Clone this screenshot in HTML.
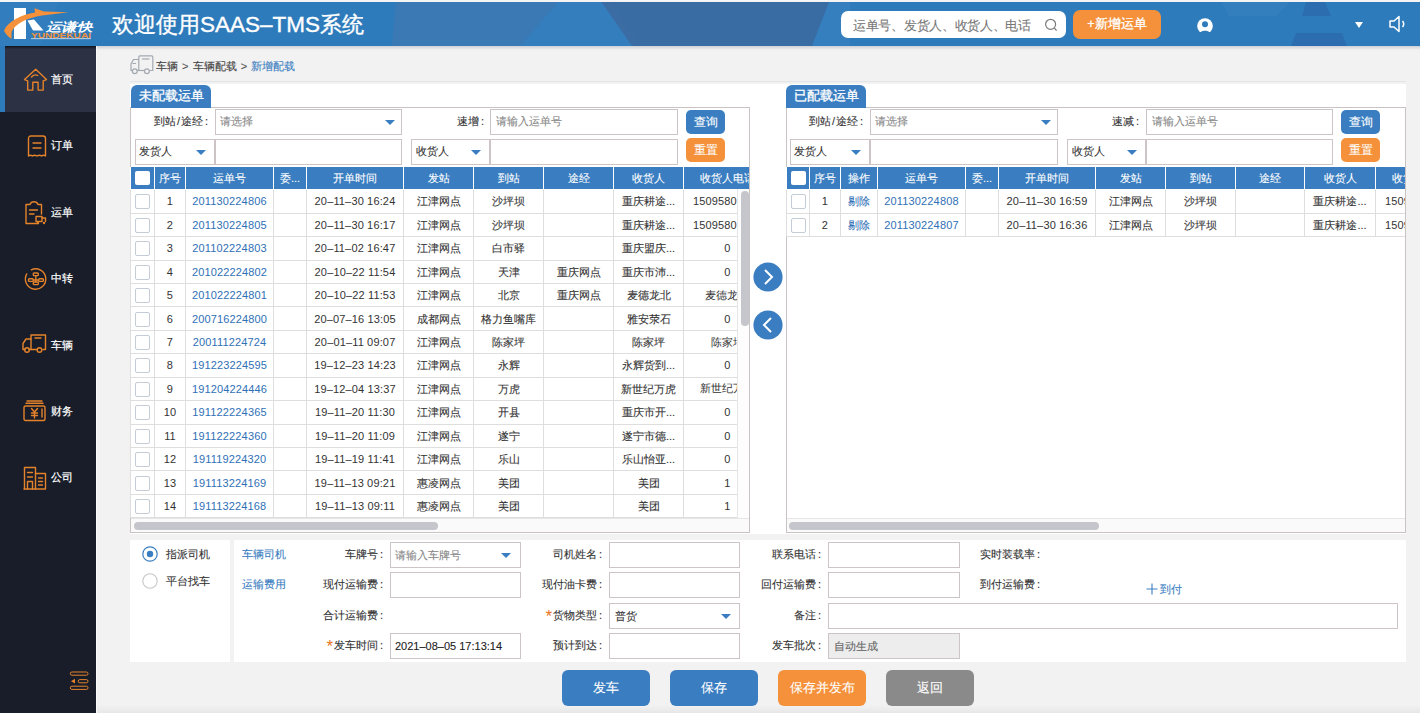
<!DOCTYPE html><html><head><meta charset="utf-8"><title>SAAS-TMS</title><style>
*{margin:0;padding:0;box-sizing:border-box}
html,body{width:1420px;height:713px;overflow:hidden;background:#f2f2f2;font-family:"Liberation Sans",sans-serif;color:#333;font-size:11px;-webkit-text-stroke:0.1px currentColor}
.abs{position:absolute}
.t{position:absolute;white-space:nowrap;line-height:1}
#hdr{position:absolute;left:0;top:0;width:1420px;height:46px;background:#2e7bbb;border-top:2px solid #f4f4f4;overflow:hidden}
#side{position:absolute;left:0;top:46px;width:96px;height:667px;background:#181d29}
.mi{position:absolute;left:0;width:96px;height:66px}
.mi .tx{position:absolute;left:51px;color:#fff;font-size:11px;line-height:1;white-space:nowrap}
.mi svg{position:absolute}
.panel{position:absolute;background:#fff;border:1px solid #c9c3c3}
.tab{position:absolute;background:#3a7ec1;color:#fff;-webkit-text-stroke:0.3px #fff;font-size:12.7px;border-radius:6px 6px 0 0;text-align:center}
.inp{position:absolute;background:#fff;border:1px solid #cdc5c5}
.ph{color:#888}
.caret{position:absolute;width:0;height:0;border-left:5px solid transparent;border-right:5px solid transparent;border-top:5px solid #3a7ec1}
.btn{position:absolute;color:#fff;border-radius:6px;text-align:center}
table{border-collapse:collapse;table-layout:fixed;position:absolute}
td,th{border:1px solid #dedede;text-align:center;white-space:nowrap;overflow:hidden;font-weight:normal;padding:0}
th{background:#3a7ec1;color:#fff;border-color:#fff;border-top:0;font-size:11px}
td{color:#333;font-size:11px;padding-top:1px}
.thumb{background:#c4c6cb}
.lnk{color:#2f70b6}
.cb{display:inline-block;width:15px;height:15px;border:1px solid #c4ccd6;border-radius:2px;background:#fff;vertical-align:middle}
.num{font-size:11px;letter-spacing:0.15px;-webkit-text-stroke:0;position:relative;top:-0.5px}
.lbl{position:absolute;white-space:nowrap;line-height:1;font-size:11px;color:#333;text-align:right}
.star{color:#e8761e;font-size:16px;vertical-align:-3px;line-height:0;margin-right:1px}
.cl{margin-left:2px}
.sl{margin:0 1px}
</style></head><body>
<div id="hdr">
<svg class="abs" style="left:0;top:-2px" width="1420" height="46" viewBox="0 0 1420 46"><polygon points="0,0 60,0 40,46 0,46" fill="#3380c0" opacity="0.5"/><polygon points="396,0 560,0 520,46 392,46" fill="#3f78b2" opacity="0.75"/><polygon points="560,0 610,0 640,46 520,46" fill="#3a80c0" opacity="0.6"/><polygon points="600,0 830,0 812,46 632,46" fill="#3c6aa0" opacity="0.85"/><polygon points="830,0 850,0 850,46 812,46" fill="#3a82c2" opacity="0.6"/><polygon points="1221,2 1290,2 1276,16 1229,16" fill="#3a82c2" opacity="0.45"/><polygon points="1306,2 1325,2 1331,16 1302,16" fill="#2c6cae" opacity="0.9"/><polygon points="1296,33 1342,33 1347,46 1291,46" fill="#2c6cae" opacity="0.9"/></svg>
<svg class="abs" style="left:0;top:-2px" width="100" height="46" viewBox="0 0 100 46"><rect x="14" y="8" width="12" height="31" fill="#fff"/><polygon points="27.5,20.5 34,19.5 43.5,30.5 33,30.5" fill="#fff"/><path d="M4,30.5 C8,21 22,14.5 35,12.5 L34.5,8.3 L44,11.5 L68.5,12.2 L42,15.5 C27,18 15,23.5 11.5,32 L11.5,39 C8,36.5 5,33.5 4,30.5 Z" fill="#f5913a"/><text x="46" y="30.5" fill="#fff" font-size="12" font-style="italic" font-weight="bold" font-family="Liberation Sans" textLength="46" lengthAdjust="spacingAndGlyphs">运谦快</text><text x="31" y="37.6" fill="#f5913a" font-size="6.5" font-weight="bold" font-family="Liberation Sans" textLength="60" lengthAdjust="spacingAndGlyphs">YUNDEKUAI</text><rect x="31" y="38.3" width="60" height="0.8" fill="#dfe8f0"/></svg>
<div class="t" style="left:112px;top:10px;font-size:22px;color:#fff;line-height:26px;-webkit-text-stroke:0.35px #fff">欢迎使用<span style="font-size:22.5px">SAAS–TMS</span>系统</div>
<div class="abs" style="left:841px;top:9px;width:225px;height:27px;background:#fff;border-radius:7px"></div>
<div class="t" style="left:853px;top:16.5px;letter-spacing:-0.3px;font-size:13px;color:#777;line-height:14px">运单号、发货人、收货人、电话</div>
<svg class="abs" style="left:1044px;top:16px" width="16" height="16" viewBox="0 0 16 16"><circle cx="6.6" cy="6.3" r="5" fill="none" stroke="#7a7a7a" stroke-width="1.2"/><line x1="10.5" y1="10.3" x2="12.6" y2="12.6" stroke="#7a7a7a" stroke-width="1.3"/></svg>
<div class="btn" style="left:1073px;top:8px;width:88px;height:29px;background:#f5913a;border-radius:7px;font-size:12.5px;line-height:29px;-webkit-text-stroke:0.3px #fff">+新增运单</div>
<svg class="abs" style="left:1196px;top:15px" width="18" height="18" viewBox="0 0 18 18"><circle cx="9" cy="9" r="7.8" fill="#fff"/><circle cx="9" cy="7.3" r="3" fill="#2e7bbb"/><path d="M3.2,17.5 C3.5,12.5 14.5,12.5 14.8,17.5 Z" fill="#2e7bbb"/></svg>
<div class="abs" style="left:1355px;top:20px;width:0;height:0;border-left:4.5px solid transparent;border-right:4.5px solid transparent;border-top:6px solid #fff"></div>
<svg class="abs" style="left:1388px;top:13px" width="20" height="18" viewBox="0 0 20 18"><path d="M2,6 L6,6 L11,1.5 L11,16.5 L6,12 L2,12 Z" fill="none" stroke="#fff" stroke-width="1.5" stroke-linejoin="round"/><path d="M14.5,6 Q17,9 14.5,12" fill="none" stroke="#fff" stroke-width="1.5"/></svg>
</div>
<div id="side">
<div class="mi" style="top:0;background:#2c3144"><div class="abs" style="left:0;top:0;width:5px;height:66px;background:#2e7bbb"></div></div>
<div class="abs" style="left:5px;top:0;width:91px;height:3px;background:linear-gradient(#10131a,#2c3144)"></div>
<div class="t" style="left:51px;top:27px;color:#fff;font-size:11px;line-height:12px;-webkit-text-stroke:0.2px #fff">首页</div>
<svg class="abs" style="left:23px;top:21px" width="26" height="25" viewBox="0 0 26 25"><path d="M4.7,13.8 L1.5,12.6 L12.75,2.3 L23.5,12.6 L20.2,13.8 L20.2,23.1 L15.1,23.1 L15.1,15.3 L9.8,15.3 L9.8,23.1 L4.7,23.1 Z" fill="none" stroke="#e4832b" stroke-width="1.4" stroke-linejoin="round" stroke-linecap="round"/><path d="M8.5,10 Q11.5,6.8 14.8,8.5" fill="none" stroke="#e4832b" stroke-width="1.4" stroke-linejoin="round" stroke-linecap="round"/></svg>
<div class="t" style="left:51px;top:93px;color:#fff;font-size:11px;line-height:12px;-webkit-text-stroke:0.2px #fff">订单</div>
<svg class="abs" style="left:27px;top:89px" width="20" height="23" viewBox="0 0 20 23"><path d="M1.5,3.5 Q1.5,1 4,1 L16,1 Q18.5,1 18.5,3.5 L18.5,21 Q16.5,19.5 14.5,21 Q12.5,19.5 10,21 Q7.5,19.5 5.5,21 Q3.5,19.5 1.5,21 Z" fill="none" stroke="#e4832b" stroke-width="1.4" stroke-linejoin="round" stroke-linecap="round"/><line x1="6" y1="8" x2="14" y2="8" fill="none" stroke="#e4832b" stroke-width="1.4" stroke-linejoin="round" stroke-linecap="round"/><line x1="6" y1="13" x2="14" y2="13" fill="none" stroke="#e4832b" stroke-width="1.4" stroke-linejoin="round" stroke-linecap="round"/></svg>
<div class="t" style="left:51px;top:160px;color:#fff;font-size:11px;line-height:12px;-webkit-text-stroke:0.2px #fff">运单</div>
<svg class="abs" style="left:24px;top:155px" width="23" height="24" viewBox="0 0 23 24"><path d="M14,22.5 L2,22.5 L2,3.5 L6,3.5 Q7,0.8 10,0.8 Q13,0.8 14,3.5 L17.5,3.5 L17.5,13" fill="none" stroke="#e4832b" stroke-width="1.4" stroke-linejoin="round" stroke-linecap="round"/><line x1="5.5" y1="9" x2="13.5" y2="9" fill="none" stroke="#e4832b" stroke-width="1.4" stroke-linejoin="round" stroke-linecap="round"/><line x1="5.5" y1="13" x2="10" y2="13" fill="none" stroke="#e4832b" stroke-width="1.4" stroke-linejoin="round" stroke-linecap="round"/><rect x="12" y="15.5" width="6" height="5" fill="none" stroke="#e4832b" stroke-width="1.4" stroke-linejoin="round" stroke-linecap="round"/><path d="M18,17 L21.5,17 L21.5,20.5" fill="none" stroke="#e4832b" stroke-width="1.4" stroke-linejoin="round" stroke-linecap="round"/><circle cx="14" cy="22" r="1.2" fill="#e4832b"/><circle cx="20" cy="22" r="1.2" fill="#e4832b"/></svg>
<div class="t" style="left:51px;top:226px;color:#fff;font-size:11px;line-height:12px;-webkit-text-stroke:0.2px #fff">中转</div>
<svg class="abs" style="left:23px;top:220px" width="26" height="26" viewBox="0 0 26 26"><path d="M8.29,3.76 A10.2,10.2 0 1 1 3.77,7.9" fill="none" stroke="#e4832b" stroke-width="1.4" stroke-linejoin="round" stroke-linecap="round"/><rect x="10.3" y="7" width="5" height="2.6" rx="0.8" fill="none" stroke="#e4832b" stroke-width="1.4" stroke-linejoin="round" stroke-linecap="round"/><rect x="5.5" y="12.8" width="4.8" height="2.6" rx="0.8" fill="none" stroke="#e4832b" stroke-width="1.4" stroke-linejoin="round" stroke-linecap="round"/><rect x="15.6" y="12.8" width="4.8" height="2.6" rx="0.8" fill="none" stroke="#e4832b" stroke-width="1.4" stroke-linejoin="round" stroke-linecap="round"/><rect x="10.3" y="16" width="5" height="2.6" rx="0.8" fill="none" stroke="#e4832b" stroke-width="1.4" stroke-linejoin="round" stroke-linecap="round"/><path d="M12.8,9.6 L12.8,16 M10.3,14 L15.6,14" fill="none" stroke="#e4832b" stroke-width="1.4" stroke-linejoin="round" stroke-linecap="round"/></svg>
<div class="t" style="left:51px;top:293px;color:#fff;font-size:11px;line-height:12px;-webkit-text-stroke:0.2px #fff">车辆</div>
<svg class="abs" style="left:22px;top:288px" width="26" height="20" viewBox="0 0 26 20"><path d="M9,15.5 L9,1 L23.5,1 L23.5,15.5 L21,15.5" fill="none" stroke="#e4832b" stroke-width="1.4" stroke-linejoin="round" stroke-linecap="round"/><path d="M9,5 L4,5 L1,9.5 L1,15.5 L3,15.5" fill="none" stroke="#e4832b" stroke-width="1.4" stroke-linejoin="round" stroke-linecap="round"/><line x1="7" y1="15.5" x2="15" y2="15.5" fill="none" stroke="#e4832b" stroke-width="1.4" stroke-linejoin="round" stroke-linecap="round"/><circle cx="5" cy="16" r="2.3" fill="none" stroke="#e4832b" stroke-width="1.4" stroke-linejoin="round" stroke-linecap="round"/><circle cx="17.5" cy="16" r="2.3" fill="none" stroke="#e4832b" stroke-width="1.4" stroke-linejoin="round" stroke-linecap="round"/><line x1="13" y1="4" x2="19" y2="4" fill="none" stroke="#e4832b" stroke-width="1.4" stroke-linejoin="round" stroke-linecap="round"/></svg>
<div class="t" style="left:51px;top:359px;color:#fff;font-size:11px;line-height:12px;-webkit-text-stroke:0.2px #fff">财务</div>
<svg class="abs" style="left:23px;top:354px" width="23" height="22" viewBox="0 0 23 22"><rect x="1" y="6" width="21" height="14.5" rx="1.5" fill="none" stroke="#e4832b" stroke-width="1.4" stroke-linejoin="round" stroke-linecap="round"/><line x1="3" y1="3.3" x2="20" y2="3.3" fill="none" stroke="#e4832b" stroke-width="1.4" stroke-linejoin="round" stroke-linecap="round"/><line x1="4" y1="1" x2="19" y2="1" fill="none" stroke="#e4832b" stroke-width="1.4" stroke-linejoin="round" stroke-linecap="round"/><path d="M8.5,8.5 L11.5,12 L14.5,8.5 M11.5,12 L11.5,18 M8.5,13 L14.5,13 M8.5,15.5 L14.5,15.5" fill="none" stroke="#e4832b" stroke-width="1.4" stroke-linejoin="round" stroke-linecap="round"/><line x1="19" y1="9" x2="19" y2="17" fill="none" stroke="#e4832b" stroke-width="1.4" stroke-linejoin="round" stroke-linecap="round"/></svg>
<div class="t" style="left:51px;top:425px;color:#fff;font-size:11px;line-height:12px;-webkit-text-stroke:0.2px #fff">公司</div>
<svg class="abs" style="left:23px;top:420px" width="24" height="24" viewBox="0 0 24 24"><path d="M1.5,23 L1.5,1.5 L12.5,1.5 L12.5,23" fill="none" stroke="#e4832b" stroke-width="1.4" stroke-linejoin="round" stroke-linecap="round"/><path d="M12.5,7.5 L22.5,7.5 L22.5,23 L1,23" fill="none" stroke="#e4832b" stroke-width="1.4" stroke-linejoin="round" stroke-linecap="round"/><line x1="4.5" y1="6.5" x2="9.5" y2="6.5" fill="none" stroke="#e4832b" stroke-width="1.4" stroke-linejoin="round" stroke-linecap="round"/><line x1="4.5" y1="11" x2="9.5" y2="11" fill="none" stroke="#e4832b" stroke-width="1.4" stroke-linejoin="round" stroke-linecap="round"/><path d="M4.5,23 L4.5,15.5 L9.5,15.5 L9.5,23" fill="none" stroke="#e4832b" stroke-width="1.4" stroke-linejoin="round" stroke-linecap="round"/><line x1="15.5" y1="12" x2="19.5" y2="12" fill="none" stroke="#e4832b" stroke-width="1.4" stroke-linejoin="round" stroke-linecap="round"/><line x1="15.5" y1="15.5" x2="19.5" y2="15.5" fill="none" stroke="#e4832b" stroke-width="1.4" stroke-linejoin="round" stroke-linecap="round"/><line x1="15.5" y1="19" x2="19.5" y2="19" fill="none" stroke="#e4832b" stroke-width="1.4" stroke-linejoin="round" stroke-linecap="round"/></svg>
<svg class="abs" style="left:69px;top:624px" width="20" height="22" viewBox="0 0 20 22"><rect x="1.3" y="2" width="17.7" height="3.2" rx="1.6" fill="none" stroke="#e4832b" stroke-width="1"/><rect x="9.2" y="9.6" width="9.8" height="3.2" rx="1.6" fill="none" stroke="#e4832b" stroke-width="1"/><rect x="1.3" y="16.2" width="17.7" height="3.2" rx="1.6" fill="none" stroke="#e4832b" stroke-width="1"/><path d="M2,11.2 L6,8.8 L6,13.6 Z" fill="#e4832b"/></svg>
</div>
<div class="abs" style="left:96px;top:46px;width:1324px;height:4px;background:linear-gradient(#cdd0d6,#f2f2f2)"></div>
<div class="abs" style="left:96px;top:46px;width:1px;height:667px;background:#fafafa"></div>
<div class="abs" style="left:97px;top:705px;width:1323px;height:8px;background:linear-gradient(#f2f2f2,#e7e7e7)"></div>
<svg class="abs" style="left:130px;top:55px" width="24" height="21" viewBox="0 0 24 21"><path d="M8.8,15.5 L8.8,2 Q8.8,0.8 10,0.8 L21.8,0.8 Q22.8,0.8 22.8,2 L22.8,15.5 L19.5,15.5" fill="none" stroke="#a3a9b1" stroke-width="1.2"/><path d="M8.8,4.5 L3.5,4.5 L1,9 L1,15.5 L2.5,15.5" fill="none" stroke="#a3a9b1" stroke-width="1.2"/><line x1="7" y1="15.5" x2="14" y2="15.5" stroke="#a3a9b1" stroke-width="1.2"/><circle cx="4.8" cy="16.2" r="2.4" fill="none" stroke="#a3a9b1" stroke-width="1.2"/><circle cx="16.9" cy="16.2" r="2.4" fill="none" stroke="#a3a9b1" stroke-width="1.2"/><line x1="12" y1="4" x2="19.5" y2="4" stroke="#a3a9b1" stroke-width="1.2"/><path d="M2.5,8.5 L6,8.5" stroke="#a3a9b1" stroke-width="1"/></svg>
<div class="t" style="left:156px;top:60px;font-size:11px;line-height:12px;color:#444">车辆 <span style="color:#555;margin:0 1px">&gt;</span> 车辆配载 <span style="color:#555;margin:0 1px">&gt;</span> <span style="color:#3a7ec1">新增配载</span></div>
<div class="abs" style="left:130px;top:81px;width:1276px;height:0;border-top:1px solid #e2e4e8"></div>
<div class="abs" style="left:130px;top:84px;width:1276px;height:450px;background:#fff"></div>
<div class="panel" style="left:130px;top:107px;width:620px;height:426px"></div>
<div class="tab" style="left:131px;top:85px;width:80px;height:23px;line-height:23px">未配载运单</div>
<div class="lbl" style="left:208px;top:115.5px;width:80px;margin-left:-80px">到站<span class="sl">/</span>途经<span class="cl">:</span></div>
<div class="inp" style="left:215px;top:109px;width:187px;height:26px"></div>
<div class="t ph" style="left:220px;top:116px;font-size:11px">请选择</div>
<div class="caret" style="left:385px;top:120px"></div>
<div class="lbl" style="left:484px;top:115.5px;width:60px;margin-left:-60px">速增<span class="cl">:</span></div>
<div class="inp" style="left:490px;top:109px;width:188px;height:26px"></div>
<div class="t ph" style="left:496px;top:116px;font-size:11px">请输入运单号</div>
<div class="btn" style="left:686px;top:110px;width:39px;height:24px;background:#3a7ec1;font-size:12px;line-height:24px;border-radius:5px">查询</div>
<div class="inp" style="left:135px;top:139px;width:80px;height:26px"></div>
<div class="t" style="left:139px;top:146px;font-size:11px;color:#333">发货人</div>
<div class="caret" style="left:196px;top:150px"></div>
<div class="inp" style="left:215px;top:139px;width:187px;height:26px"></div>
<div class="inp" style="left:411px;top:139px;width:79px;height:26px"></div>
<div class="t" style="left:416px;top:146px;font-size:11px;color:#333">收货人</div>
<div class="caret" style="left:471px;top:150px"></div>
<div class="inp" style="left:490px;top:139px;width:188px;height:26px"></div>
<div class="btn" style="left:686px;top:138px;width:39px;height:24px;background:#f5913a;font-size:12px;line-height:24px;border-radius:5px">重置</div>
<div class="abs" style="left:130px;top:167px;width:619px;height:351px;overflow:hidden">
<table style="left:0;top:0;width:641px">
<colgroup><col style="width:24px"><col style="width:31px"><col style="width:88px"><col style="width:33px"><col style="width:97px"><col style="width:70px"><col style="width:70px"><col style="width:70px"><col style="width:70px"><col style="width:88px"></colgroup>
<tr style="height:22.7px"><th><span class="cb" style="border:0;width:15px;height:14px"></span></th><th>序号</th><th>运单号</th><th>委...</th><th>开单时间</th><th>发站</th><th>到站</th><th>途经</th><th>收货人</th><th>收货人电话</th></tr>
<tr style="height:23.44px"><td><span class="cb"></span></td><td><span class="num">1</span></td><td><span class="lnk num">201130224806</span></td><td></td><td><span class="num">20–11–30 16:24</span></td><td>江津网点</td><td>沙坪坝</td><td></td><td>重庆耕途...</td><td><span class="num">15095801234</span></td></tr>
<tr style="height:23.44px"><td><span class="cb"></span></td><td><span class="num">2</span></td><td><span class="lnk num">201130224805</span></td><td></td><td><span class="num">20–11–30 16:17</span></td><td>江津网点</td><td>沙坪坝</td><td></td><td>重庆耕途...</td><td><span class="num">15095801234</span></td></tr>
<tr style="height:23.44px"><td><span class="cb"></span></td><td><span class="num">3</span></td><td><span class="lnk num">201102224803</span></td><td></td><td><span class="num">20–11–02 16:47</span></td><td>江津网点</td><td>白市驿</td><td></td><td>重庆盟庆...</td><td><span class="num">0</span></td></tr>
<tr style="height:23.44px"><td><span class="cb"></span></td><td><span class="num">4</span></td><td><span class="lnk num">201022224802</span></td><td></td><td><span class="num">20–10–22 11:54</span></td><td>江津网点</td><td>天津</td><td>重庆网点</td><td>重庆市沛...</td><td><span class="num">0</span></td></tr>
<tr style="height:23.44px"><td><span class="cb"></span></td><td><span class="num">5</span></td><td><span class="lnk num">201022224801</span></td><td></td><td><span class="num">20–10–22 11:53</span></td><td>江津网点</td><td>北京</td><td>重庆网点</td><td>麦德龙北</td><td><span class="num">麦德龙北</span></td></tr>
<tr style="height:23.44px"><td><span class="cb"></span></td><td><span class="num">6</span></td><td><span class="lnk num">200716224800</span></td><td></td><td><span class="num">20–07–16 13:05</span></td><td>成都网点</td><td>格力鱼嘴库</td><td></td><td>雅安荥石</td><td><span class="num">0</span></td></tr>
<tr style="height:23.44px"><td><span class="cb"></span></td><td><span class="num">7</span></td><td><span class="lnk num">200111224724</span></td><td></td><td><span class="num">20–01–11 09:07</span></td><td>江津网点</td><td>陈家坪</td><td></td><td>陈家坪</td><td><span class="num">陈家坪</span></td></tr>
<tr style="height:23.44px"><td><span class="cb"></span></td><td><span class="num">8</span></td><td><span class="lnk num">191223224595</span></td><td></td><td><span class="num">19–12–23 14:23</span></td><td>江津网点</td><td>永辉</td><td></td><td>永辉货到...</td><td><span class="num">0</span></td></tr>
<tr style="height:23.44px"><td><span class="cb"></span></td><td><span class="num">9</span></td><td><span class="lnk num">191204224446</span></td><td></td><td><span class="num">19–12–04 13:37</span></td><td>江津网点</td><td>万虎</td><td></td><td>新世纪万虎</td><td><span class="num">新世纪万虎</span></td></tr>
<tr style="height:23.44px"><td><span class="cb"></span></td><td><span class="num">10</span></td><td><span class="lnk num">191122224365</span></td><td></td><td><span class="num">19–11–20 11:30</span></td><td>江津网点</td><td>开县</td><td></td><td>重庆市开...</td><td><span class="num">0</span></td></tr>
<tr style="height:23.44px"><td><span class="cb"></span></td><td><span class="num">11</span></td><td><span class="lnk num">191122224360</span></td><td></td><td><span class="num">19–11–20 11:09</span></td><td>江津网点</td><td>遂宁</td><td></td><td>遂宁市德...</td><td><span class="num">0</span></td></tr>
<tr style="height:23.44px"><td><span class="cb"></span></td><td><span class="num">12</span></td><td><span class="lnk num">191119224320</span></td><td></td><td><span class="num">19–11–19 11:41</span></td><td>江津网点</td><td>乐山</td><td></td><td>乐山怡亚...</td><td><span class="num">0</span></td></tr>
<tr style="height:23.44px"><td><span class="cb"></span></td><td><span class="num">13</span></td><td><span class="lnk num">191113224169</span></td><td></td><td><span class="num">19–11–13 09:21</span></td><td>惠凌网点</td><td>美团</td><td></td><td>美团</td><td><span class="num">1</span></td></tr>
<tr style="height:23.44px"><td><span class="cb"></span></td><td><span class="num">14</span></td><td><span class="lnk num">191113224168</span></td><td></td><td><span class="num">19–11–13 09:11</span></td><td>惠凌网点</td><td>美团</td><td></td><td>美团</td><td><span class="num">1</span></td></tr>
</table></div>
<div class="abs" style="left:737px;top:189px;width:12px;height:329px;background:#fdfdfd;border-left:1px solid #e6e6e6"></div>
<div class="abs" style="left:741px;top:191px;width:8px;height:135px;background:#c4c6cb;border-radius:4px"></div>
<div class="abs" style="left:131px;top:518px;width:618px;height:14px;background:#fafafa;border-top:1px solid #e6e6e6"></div>
<div class="abs" style="left:134px;top:522px;width:304px;height:8px;background:#c4c6cb;border-radius:4px"></div>
<svg class="abs" style="left:753px;top:262px" width="30" height="30" viewBox="-15 -15 30 30"><circle r="14.6" fill="#3a7ec1"/><path d="M-3,-7 L4,0 L-3,7" fill="none" stroke="#fff" stroke-width="2"/></svg>
<svg class="abs" style="left:753px;top:310px" width="30" height="30" viewBox="-15 -15 30 30"><circle r="14.6" fill="#3a7ec1"/><path d="M3,-7 L-4,0 L3,7" fill="none" stroke="#fff" stroke-width="2"/></svg>
<div class="panel" style="left:786px;top:107px;width:620px;height:426px"></div>
<div class="tab" style="left:786px;top:85px;width:80px;height:23px;line-height:23px">已配载运单</div>
<div class="lbl" style="left:863px;top:115.5px;width:80px;margin-left:-80px">到站<span class="sl">/</span>途经<span class="cl">:</span></div>
<div class="inp" style="left:870px;top:109px;width:188px;height:26px"></div>
<div class="t ph" style="left:875px;top:116px;font-size:11px">请选择</div>
<div class="caret" style="left:1041px;top:120px"></div>
<div class="lbl" style="left:1139px;top:115.5px;width:60px;margin-left:-60px">速减<span class="cl">:</span></div>
<div class="inp" style="left:1146px;top:109px;width:187px;height:26px"></div>
<div class="t ph" style="left:1152px;top:116px;font-size:11px">请输入运单号</div>
<div class="btn" style="left:1341px;top:110px;width:39px;height:24px;background:#3a7ec1;font-size:12px;line-height:24px;border-radius:5px">查询</div>
<div class="inp" style="left:790px;top:139px;width:80px;height:26px"></div>
<div class="t" style="left:794px;top:146px;font-size:11px;color:#333">发货人</div>
<div class="caret" style="left:851px;top:150px"></div>
<div class="inp" style="left:870px;top:139px;width:188px;height:26px"></div>
<div class="inp" style="left:1067px;top:139px;width:79px;height:26px"></div>
<div class="t" style="left:1072px;top:146px;font-size:11px;color:#333">收货人</div>
<div class="caret" style="left:1127px;top:150px"></div>
<div class="inp" style="left:1146px;top:139px;width:187px;height:26px"></div>
<div class="btn" style="left:1341px;top:138px;width:39px;height:24px;background:#f5913a;font-size:12px;line-height:24px;border-radius:5px">重置</div>
<div class="abs" style="left:786px;top:167px;width:619px;height:351px;overflow:hidden">
<table style="left:0;top:0;width:677px">
<colgroup><col style="width:23px"><col style="width:31px"><col style="width:37px"><col style="width:88px"><col style="width:33px"><col style="width:97px"><col style="width:70px"><col style="width:70px"><col style="width:69px"><col style="width:71px"><col style="width:88px"></colgroup>
<tr style="height:22.7px"><th><span class="cb" style="border:0;width:15px;height:14px"></span></th><th>序号</th><th>操作</th><th>运单号</th><th>委...</th><th>开单时间</th><th>发站</th><th>到站</th><th>途经</th><th>收货人</th><th>收货人电话</th></tr>
<tr style="height:23.44px"><td><span class="cb"></span></td><td><span class="num">1</span></td><td><span class="lnk">剔除</span></td><td><span class="lnk num">201130224808</span></td><td></td><td><span class="num">20–11–30 16:59</span></td><td>江津网点</td><td>沙坪坝</td><td></td><td>重庆耕途...</td><td><span class="num">15095801234</span></td></tr>
<tr style="height:23.44px"><td><span class="cb"></span></td><td><span class="num">2</span></td><td><span class="lnk">剔除</span></td><td><span class="lnk num">201130224807</span></td><td></td><td><span class="num">20–11–30 16:36</span></td><td>江津网点</td><td>沙坪坝</td><td></td><td>重庆耕途...</td><td><span class="num">15095801234</span></td></tr>
</table></div>
<div class="abs" style="left:787px;top:518px;width:618px;height:14px;background:#fafafa;border-top:1px solid #e6e6e6"></div>
<div class="abs" style="left:789px;top:522px;width:310px;height:8px;background:#c4c6cb;border-radius:4px"></div>
<div class="abs" style="left:130px;top:540px;width:100px;height:122px;background:#fff"></div>
<div class="abs" style="left:234px;top:540px;width:1172px;height:122px;background:#fff"></div>
<svg class="abs" style="left:142px;top:546px" width="16" height="16" viewBox="0 0 16 16"><circle cx="8" cy="8" r="7.2" fill="#fff" stroke="#3a7ec1" stroke-width="1.2"/><circle cx="8" cy="8" r="3.2" fill="#3a7ec1"/></svg>
<svg class="abs" style="left:142px;top:573px" width="16" height="16" viewBox="0 0 16 16"><circle cx="8" cy="8" r="7.2" fill="#fff" stroke="#c6c6c6" stroke-width="1.1"/></svg>
<div class="t" style="left:166px;top:548px;font-size:11px;line-height:12px;color:#333">指派司机</div>
<div class="t" style="left:166px;top:575px;font-size:11px;line-height:12px;color:#333">平台找车</div>
<div class="t" style="left:242px;top:548px;font-size:11px;line-height:12px;color:#3a7ec1">车辆司机</div>
<div class="t" style="left:242px;top:578px;font-size:11px;line-height:12px;color:#3a7ec1">运输费用</div>
<div class="lbl" style="left:383px;top:548px;width:100px;margin-left:-100px;line-height:12px">车牌号<span class="cl">:</span></div>
<div class="inp" style="left:390px;top:542px;width:131px;height:26px;background:#fff"></div>
<div class="t ph" style="left:395px;top:549px;font-size:11px;line-height:12px">请输入车牌号</div>
<div class="caret" style="left:501px;top:553px"></div>
<div class="lbl" style="left:602px;top:548px;width:100px;margin-left:-100px;line-height:12px">司机姓名<span class="cl">:</span></div>
<div class="inp" style="left:609px;top:542px;width:131px;height:26px;background:#fff"></div>
<div class="lbl" style="left:821px;top:548px;width:100px;margin-left:-100px;line-height:12px">联系电话<span class="cl">:</span></div>
<div class="inp" style="left:828px;top:542px;width:132px;height:26px;background:#fff"></div>
<div class="t" style="left:980px;top:548px;font-size:11px;line-height:12px;color:#333">实时装载率<span class="cl">:</span></div>
<div class="lbl" style="left:383px;top:578px;width:100px;margin-left:-100px;line-height:12px">现付运输费<span class="cl">:</span></div>
<div class="inp" style="left:390px;top:572px;width:131px;height:26px;background:#fff"></div>
<div class="lbl" style="left:602px;top:578px;width:100px;margin-left:-100px;line-height:12px">现付油卡费<span class="cl">:</span></div>
<div class="inp" style="left:609px;top:572px;width:131px;height:26px;background:#fff"></div>
<div class="lbl" style="left:821px;top:578px;width:100px;margin-left:-100px;line-height:12px">回付运输费<span class="cl">:</span></div>
<div class="inp" style="left:828px;top:572px;width:132px;height:26px;background:#fff"></div>
<div class="t" style="left:980px;top:578px;font-size:11px;line-height:12px;color:#333">到付运输费<span class="cl">:</span></div>
<div class="t" style="left:1146px;top:583px;font-size:11px;line-height:12px;color:#3a7ec1"><svg width="12" height="12" viewBox="0 0 12 12" style="vertical-align:-2px;margin-right:2px"><path d="M0.5,6 L11.5,6 M6,0.5 L6,11.5" stroke="#3a7ec1" stroke-width="1.1"/></svg>到付</div>
<div class="lbl" style="left:383px;top:609px;width:100px;margin-left:-100px;line-height:12px">合计运输费<span class="cl">:</span></div>
<div class="lbl" style="left:602px;top:609px;width:100px;margin-left:-100px;line-height:12px"><span class="star">*</span>货物类型<span class="cl">:</span></div>
<div class="inp" style="left:609px;top:603px;width:131px;height:26px;background:#fff"></div>
<div class="t" style="left:615px;top:610px;font-size:11px;line-height:12px;color:#333">普货</div>
<div class="caret" style="left:721px;top:614px"></div>
<div class="lbl" style="left:821px;top:609px;width:100px;margin-left:-100px;line-height:12px">备注<span class="cl">:</span></div>
<div class="inp" style="left:828px;top:603px;width:570px;height:26px;background:#fff"></div>
<div class="lbl" style="left:383px;top:639px;width:100px;margin-left:-100px;line-height:12px"><span class="star">*</span>发车时间<span class="cl">:</span></div>
<div class="inp" style="left:390px;top:633px;width:131px;height:26px;background:#fff"></div>
<div class="t" style="left:395px;top:640px;font-size:11px;line-height:12px;color:#222">2021–08–05 17:13:14</div>
<div class="lbl" style="left:602px;top:639px;width:100px;margin-left:-100px;line-height:12px">预计到达<span class="cl">:</span></div>
<div class="inp" style="left:609px;top:633px;width:131px;height:26px;background:#fff"></div>
<div class="lbl" style="left:821px;top:639px;width:100px;margin-left:-100px;line-height:12px">发车批次<span class="cl">:</span></div>
<div class="inp" style="left:828px;top:633px;width:132px;height:26px;background:#ededed"></div>
<div class="t" style="left:834px;top:640px;font-size:11px;line-height:12px;color:#666">自动生成</div>
<div class="btn" style="left:562px;top:670px;width:88px;height:36px;background:#3a7ec1;font-size:12.5px;line-height:36px">发车</div>
<div class="btn" style="left:670px;top:670px;width:88px;height:36px;background:#3a7ec1;font-size:12.5px;line-height:36px">保存</div>
<div class="btn" style="left:778px;top:670px;width:88px;height:36px;background:#f5913a;font-size:12.5px;line-height:36px">保存并发布</div>
<div class="btn" style="left:886px;top:670px;width:88px;height:36px;background:#8a8a8a;font-size:12.5px;line-height:36px">返回</div>
</body></html>
